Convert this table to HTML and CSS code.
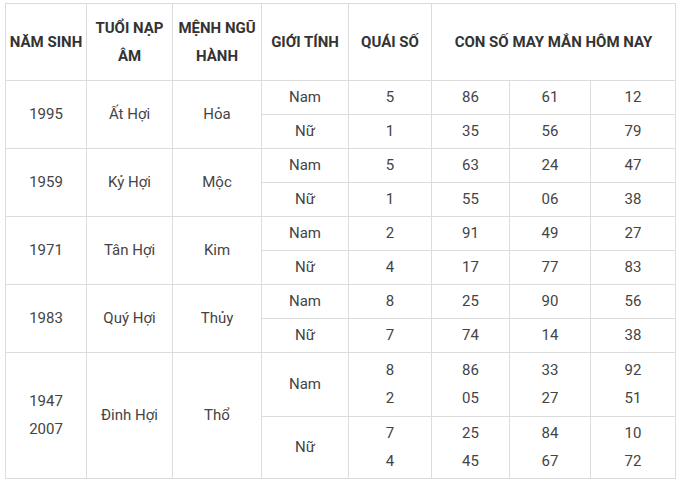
FILE: index.html
```html
<!DOCTYPE html>
<html>
<head>
<meta charset="utf-8">
<link rel="stylesheet" href="styles.css">
</head>
<body>
<table class="lucky">
  <colgroup>
    <col class="c1"><col class="c2"><col class="c3"><col class="c4"><col class="c5"><col class="c6"><col class="c7"><col class="c8">
  </colgroup>
  <thead>
    <tr class="head">
      <th>NĂM SINH</th>
      <th>TUỔI NẠP ÂM</th>
      <th>MỆNH NGŨ HÀNH</th>
      <th>GIỚI TÍNH</th>
      <th>QUÁI SỐ</th>
      <th colspan="3">CON SỐ MAY MẮN HÔM NAY</th>
    </tr>
  </thead>
  <tbody>
    <tr class="sub"><td rowspan="2">1995</td><td rowspan="2">Ất Hợi</td><td rowspan="2">Hỏa</td><td>Nam</td><td>5</td><td>86</td><td>61</td><td>12</td></tr>
    <tr class="sub"><td>Nữ</td><td>1</td><td>35</td><td>56</td><td>79</td></tr>
    <tr class="sub"><td rowspan="2">1959</td><td rowspan="2">Kỷ Hợi</td><td rowspan="2">Mộc</td><td>Nam</td><td>5</td><td>63</td><td>24</td><td>47</td></tr>
    <tr class="sub"><td>Nữ</td><td>1</td><td>55</td><td>06</td><td>38</td></tr>
    <tr class="sub"><td rowspan="2">1971</td><td rowspan="2">Tân Hợi</td><td rowspan="2">Kim</td><td>Nam</td><td>2</td><td>91</td><td>49</td><td>27</td></tr>
    <tr class="sub"><td>Nữ</td><td>4</td><td>17</td><td>77</td><td>83</td></tr>
    <tr class="sub"><td rowspan="2">1983</td><td rowspan="2">Quý Hợi</td><td rowspan="2">Thủy</td><td>Nam</td><td>8</td><td>25</td><td>90</td><td>56</td></tr>
    <tr class="sub"><td>Nữ</td><td>7</td><td>74</td><td>14</td><td>38</td></tr>
    <tr class="big1"><td rowspan="2" class="multi">1947<br>2007</td><td rowspan="2">Đinh Hợi</td><td rowspan="2">Thổ</td><td>Nam</td><td class="multi">8<br>2</td><td class="multi">86<br>05</td><td class="multi">33<br>27</td><td class="multi">92<br>51</td></tr>
    <tr class="big2"><td>Nữ</td><td class="multi">7<br>4</td><td class="multi">25<br>45</td><td class="multi">84<br>67</td><td class="multi">10<br>72</td></tr>
  </tbody>
</table>
</body>
</html>
```
FILE: styles.css
```css
html, body {
  margin: 0;
  padding: 0;
  background: #fff;
}
body {
  padding: 3px 0 0 5px;
  font-family: Roboto, "Liberation Sans", sans-serif;
}
.lucky {
  border-collapse: collapse;
  table-layout: fixed;
  width: 670px;
  color: #444;
  font-size: 15px;
}
.c1 { width: 81px; }
.c2 { width: 86px; }
.c3 { width: 89px; }
.c4 { width: 87px; }
.c5 { width: 83px; }
.c6 { width: 78px; }
.c7 { width: 81px; }
.c8 { width: 85px; }
.lucky th, .lucky td {
  border: 1px solid #dcdcdc;
  text-align: center;
  vertical-align: middle;
  padding: 0 1px 1px;
}
.lucky th {
  color: #333;
  font-weight: 700;
  font-size: 15px;
  line-height: 28px;
}
.head { height: 77px; }
.sub { height: 34px; }
.big1 { height: 64px; }
.big2 { height: 62px; }
.lucky td { line-height: 20px; }
.lucky td.multi { line-height: 28px; }
```
